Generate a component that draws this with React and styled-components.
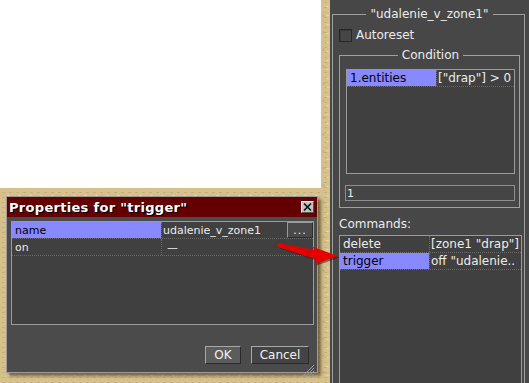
import React from 'react';
import styled, { createGlobalStyle } from 'styled-components';

const GlobalStyle = createGlobalStyle`
  html, body {
    margin: 0;
    padding: 0;
    background: #d6c18c;
  }
  body {
    font-family: "DejaVu Sans", Verdana, sans-serif;
    font-size: 11px;
    color: #ececec;
  }
`;

const Screen = styled.div`
  position: relative;
  display: flex;
  width: 529px;
  height: 383px;
  overflow: hidden;
  background-color: #d6c18c;
  background-image:
    radial-gradient(rgba(120, 92, 40, 0.22) 0.8px, transparent 1.3px),
    radial-gradient(rgba(255, 250, 225, 0.4) 0.8px, transparent 1.3px),
    radial-gradient(rgba(150, 120, 60, 0.16) 1px, transparent 1.6px);
  background-size: 7px 5px, 11px 9px, 13px 17px;
  background-position: 0 0, 3px 2px, 5px 7px;
`;

const Workspace = styled.div`
  width: 321px;
  flex: none;
  display: flex;
  flex-direction: column;
`;

const Canvas = styled.div`
  height: 188px;
  background: #ffffff;
`;

const Dialog = styled.div`
  margin: 8px 0 0 6px;
  width: 312px;
  height: 177px;
  box-sizing: border-box;
  border: 1px solid #9b9b9b;
  background: #4b4b4b;
  display: flex;
  flex-direction: column;
  box-shadow: 3px 3px 3px rgba(40, 30, 10, 0.55);
`;

const TitleBar = styled.div`
  height: 20px;
  flex: none;
  background: #640000;
  display: flex;
  align-items: center;
  justify-content: space-between;
  padding: 0 3px 0 2px;
`;

const Title = styled.span`
  font-weight: bold;
  font-size: 13px;
  letter-spacing: 0.3px;
  color: #ffffff;
  text-shadow: 1px 1px 0 #000;
`;

const CloseButton = styled.div`
  width: 13px;
  height: 12px;
  box-sizing: border-box;
  background: #c4c4c4;
  border: 1px solid;
  border-color: #eeeeee #555555 #555555 #eeeeee;
  display: flex;
  align-items: center;
  justify-content: center;
`;

const DialogBody = styled.div`
  flex: 1;
  padding: 4px 3px 0 4px;
  display: flex;
  flex-direction: column;
`;

const PropTable = styled.div`
  height: 104px;
  box-sizing: border-box;
  border: 1px solid #9b9b9b;
  background: #404040;
`;

const PropRow = styled.div`
  display: grid;
  grid-template-columns: 149px 1fr;
  height: 17px;
  box-sizing: border-box;
  border-bottom: 1px dotted #6a6a6a;
`;

const Cell = styled.div`
  display: flex;
  align-items: center;
  justify-content: space-between;
  padding-left: ${p => p.$pad || 3}px;
  white-space: nowrap;
  overflow: hidden;
  background: ${p => (p.$selected ? '#8888ff' : 'transparent')};
  color: ${p => (p.$selected ? '#000000' : '#ececec')};
  border-left: ${p => (p.$divider ? '1px dotted #6a6a6a' : 'none')};
`;

const DotsButton = styled.div`
  width: 26px;
  height: 16px;
  box-sizing: border-box;
  background: #4a4a4a;
  border: 1px solid;
  border-color: #9a9a9a #2c2c2c #2c2c2c #9a9a9a;
  display: flex;
  align-items: center;
  justify-content: center;
  letter-spacing: 1px;
`;

const ButtonRow = styled.div`
  display: flex;
  justify-content: flex-end;
  gap: 10px;
  margin-top: 21px;
  padding-right: 5px;
`;

const Button = styled.div`
  height: 18px;
  width: ${p => p.$w}px;
  box-sizing: border-box;
  background: ${p => (p.$default ? '#5c5c5c' : '#444444')};
  border: 1px solid;
  border-color: #a8a8a8 #2a2a2a #2a2a2a #a8a8a8;
  display: flex;
  align-items: center;
  justify-content: center;
  font-size: 12px;
  color: #f2f2f2;
`;

const Grip = styled.svg`
  display: block;
  margin: 0 0 0 auto;
`;

const Panel = styled.div`
  margin-left: 9px;
  width: 199px;
  flex: none;
  background: #474747;
  padding: 8px 0 0 2px;
  box-sizing: border-box;
`;

const Group = styled.fieldset`
  margin: 0;
  padding: ${p => p.$padding};
  border: 1px solid #a0a0a0;
  min-width: 0;
  height: ${p => p.$h || 'auto'};
  box-sizing: border-box;
  width: ${p => p.$w || 'auto'};
  margin-top: ${p => p.$mt || 0}px;
`;

const Legend = styled.legend`
  margin: 0 auto;
  padding: 0 4px;
  font-size: 12px;
  line-height: 13px;
  color: #ececec;
`;

const CheckRow = styled.label`
  display: flex;
  align-items: center;
  gap: 4px;
  margin-top: 7px;
  font-size: 12px;
`;

const Box = styled.span`
  width: 13px;
  height: 13px;
  box-sizing: border-box;
  border: 1px solid #2b2424;
  background: #464646;
  box-shadow: inset 1px 1px 0 #3a3a3a;
`;

const ListBox = styled.div`
  height: ${p => p.$h}px;
  box-sizing: border-box;
  border: 1px solid #9b9b9b;
  background: #404040;
  margin-top: ${p => p.$mt || 0}px;
  margin-right: ${p => p.$mr || 0}px;
`;

const ListRow = styled.div`
  display: grid;
  grid-template-columns: ${p => p.$cols};
  height: 17px;
  box-sizing: border-box;
  border-bottom: 1px dotted #6a6a6a;
  font-size: 12px;
`;

const TextInput = styled.div`
  margin-top: 11px;
  height: 16px;
  box-sizing: border-box;
  border: 1px solid #8e8e8e;
  background: #454545;
  display: flex;
  align-items: center;
  padding-left: 1px;
  margin-left: -1px;
`;

const Caption = styled.div`
  margin-top: 10px;
  margin-bottom: 4px;
  font-size: 12px;
  line-height: 13px;
`;

const Arrow = styled.svg`
  position: absolute;
  left: 270px;
  top: 236px;
  overflow: visible;
`;

function App() {
  return (
    <Screen>
      <GlobalStyle />
      <Workspace>
        <Canvas />
        <Dialog>
          <TitleBar>
            <Title>Properties for "trigger"</Title>
            <CloseButton>
              <svg width="9" height="8" viewBox="0 0 9 8">
                <path d="M1 0.5 L8 7.5 M8 0.5 L1 7.5" stroke="#111" strokeWidth="1.6" />
              </svg>
            </CloseButton>
          </TitleBar>
          <DialogBody>
            <PropTable>
              <PropRow>
                <Cell $selected>name</Cell>
                <Cell $divider $pad={1}>
                  udalenie_v_zone1
                  <DotsButton>...</DotsButton>
                </Cell>
              </PropRow>
              <PropRow>
                <Cell>on</Cell>
                <Cell $divider $pad={5}>—</Cell>
              </PropRow>
            </PropTable>
            <ButtonRow>
              <Button $w={36} $default>OK</Button>
              <Button $w={58}>Cancel</Button>
            </ButtonRow>
            <Grip width="12" height="12" viewBox="0 0 12 12">
              <path d="M12 1 L1 12 M12 4 L4 12 M12 7 L7 12 M12 10 L10 12" stroke="#9a9a9a" strokeWidth="1" />
            </Grip>
          </DialogBody>
        </Dialog>
      </Workspace>
      <Panel>
        <Group $padding="0 4px 0 6px" $w="193px" $h="420px">
          <Legend>"udalenie_v_zone1"</Legend>
          <CheckRow>
            <Box />
            Autoreset
          </CheckRow>
          <Group $padding="0 4px 6px 6px" $mt={7}>
            <Legend>Condition</Legend>
            <ListBox $h={105} $mt={7}>
              <ListRow $cols="89px 1fr">
                <Cell $selected>1.entities</Cell>
                <Cell $divider $pad={1}>["drap"] &gt; 0</Cell>
              </ListRow>
            </ListBox>
            <TextInput>1</TextInput>
          </Group>
          <Caption>Commands:</Caption>
          <ListBox $h={200} $mr={-2}>
            <ListRow $cols="89px 1fr">
              <Cell>delete</Cell>
              <Cell $divider $pad={1}>[zone1 "drap"]</Cell>
            </ListRow>
            <ListRow $cols="89px 1fr">
              <Cell $selected>trigger</Cell>
              <Cell $divider $pad={1}>off "udalenie..</Cell>
            </ListRow>
          </ListBox>
        </Group>
      </Panel>
      <Arrow width="72" height="32" viewBox="0 0 72 32">
        <g transform="translate(1.5 1.5)" fill="#3a1a10" opacity="0.55">
          <polygon points="8,7 44,14 43,11 68,20 45,28 45,23 8,11" />
        </g>
        <polygon points="8,7 44,14 43,11 68,20 45,28 45,23 8,11" fill="#e40000" />
      </Arrow>
    </Screen>
  );
}

export default App;
